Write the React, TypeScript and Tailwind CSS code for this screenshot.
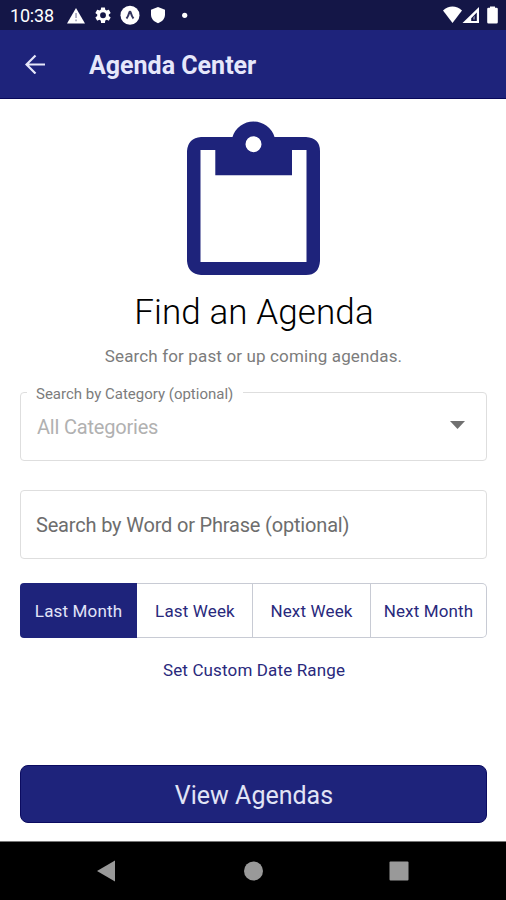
import React from "react";

function StatusBar() {
  return (
    <div className="flex h-[30px] shrink-0 items-center bg-[#141647] pl-[10px] pr-2 text-white">
      <span className="w-[45px] whitespace-nowrap pt-px text-[18px] leading-[30px] tracking-[-0.2px]">10:38</span>
      <svg className="ml-[11px]" width="134" height="30" viewBox="66 0 134 30" fill="#fff">
        <path d="M76 8 85 23.500H67Z" />
        <path d="M75.300 13h1.500v5h-1.500zM75.300 19.500h1.500v1.700h-1.500z" fill="#9a9bb4" />
        <g transform="translate(93.300 5.500) scale(.81)">
          <path d="M19.140 12.940c.04-.3.060-.61.060-.94s-.02-.64-.07-.94l2.030-1.580c.18-.14.230-.41.120-.61l-1.920-3.320c-.12-.22-.37-.29-.59-.22l-2.390.96c-.5-.38-1.030-.7-1.620-.94l-.36-2.540c-.04-.24-.24-.41-.48-.41h-3.840c-.24 0-.43.170-.47.410l-.36 2.540c-.59.240-1.130.57-1.620.94l-2.390-.96c-.22-.08-.47 0-.59.220L2.740 8.870c-.12.210-.08.470.12.610l2.030 1.580c-.05.300-.09.630-.09.940s.02.640.07.940l-2.030 1.580c-.18.140-.23.410-.12.610l1.920 3.320c.12.220.37.290.59.220l2.390-.96c.5.380 1.030.7 1.620.94l.36 2.540c.05.240.24.410.48.410h3.840c.24 0 .44-.17.470-.41l.36-2.540c.59-.24 1.130-.56 1.620-.94l2.390.96c.22.080.47 0 .59-.22l1.920-3.320c.12-.22.070-.47-.12-.61zM12 15.600A3.600 3.600 0 1 1 12 8.400a3.600 3.600 0 0 1 0 7.200z" />
        </g>
        <circle cx="130" cy="15.300" r="9.500" />
        <path d="M126.500 18.500c1.400-1.600 2.200-3.800 2.800-6 .3-1 1.100-1 1.400 0 .6 2.200 1.400 4.400 2.800 6" fill="none" stroke="#34365f" strokeWidth="2" />
        <path d="m158 7 7 2.700v4.800c0 4.300-3 7.200-7 8.700-4-1.500-7-4.400-7-8.700V9.700Z" />
        <circle cx="184.700" cy="15.300" r="2.600" />
      </svg>
      <svg className="ml-auto" width="56" height="30" viewBox="442 0 56 30" fill="#fff">
        <path d="M443 10.500c5.500-5.300 13.500-5.300 19 0L452.500 23Z" />
        <path fillRule="evenodd" d="M479 7v16h-16.500ZM476.800 12.500l-5.600 5.700v2.900h5.600Z" />
        <path d="M474.800 15.800v3.800h-1.600v-2.200Z" fill="#85869f" />
        <path d="M490 6.500h5v1.300h1.500q1.300 0 1.300 1.300v13.100q0 1.300-1.300 1.300h-8q-1.300 0-1.300-1.300V9.100q0-1.300 1.300-1.300H490Z" />
      </svg>
    </div>
  );
}

function AppBar() {
  return (
    <header className="flex h-[69px] shrink-0 items-center border-b border-[#08085a] bg-[#1e237b] pl-[25px] text-[#e6e7fa]">
      <svg width="21" height="20" viewBox="0 0 21 20" fill="none" stroke="currentColor" strokeWidth="2.200">
        <path d="M20 10.500H2M10.500 1.500l-9 9 9 9" />
      </svg>
      <h1 className="ml-[43px] mt-[3px] text-[25px] leading-[30px] font-bold">Agenda Center</h1>
    </header>
  );
}

function Clipboard() {
  return (
    <svg className="mt-[21px] self-center" width="133" height="155" viewBox="187 120 133 155">
      <path
        fill="#1e237b"
        fillRule="evenodd"
        d="M201 137H232.500a22 22 0 0 1 42 0H306q14 1 14 14V261q-1 14-14 14H201q-13-1-14-14V151q1-13 14-14ZM200.500 150V262H306.500V150H292V175.300H215.300V150ZM253.500 136.200a8 8 0 1 0 0 16 8 8 0 1 0 0-16Z"
      />
    </svg>
  );
}

const ranges = [
  { label: "Last Month", style: "w-[117px] bg-[#1e237b] text-[#e1e3f8]" },
  { label: "Last Week", style: "w-[116px] border-y border-r border-[#c8cbd4] pl-px" },
  { label: "Next Week", style: "w-[118px] border-y border-r border-[#c8cbd4]" },
  { label: "Next Month", style: "w-[116px] rounded-r-[5px] border-y border-r border-[#c8cbd4]" },
];

function DateRanges() {
  return (
    <div className="mt-[24px] flex h-[55px] w-[467px] overflow-hidden rounded-[4px] text-[17px] tracking-[0.15px] text-[#29297c]">
      {ranges.map((r) => (
        <button key={r.label} className={`flex shrink-0 items-center justify-center whitespace-nowrap pt-[2px] ${r.style}`}>
          {r.label}
        </button>
      ))}
    </div>
  );
}

function NavBar() {
  return (
    <nav className="flex h-[59px] shrink-0 items-center border-t border-[#777] bg-black">
      <svg width="506" height="58" viewBox="0 842 506 58" fill="#999">
        <path d="M97 871 115 860.500V881.500Z" />
        <circle cx="253.500" cy="871" r="9.500" />
        <rect x="389.500" y="861.500" width="19" height="19" rx="1" />
      </svg>
    </nav>
  );
}

export default function App() {
  return (
    <div className="flex h-[900px] w-[506px] flex-col overflow-hidden bg-white font-[Roboto,sans-serif]">
      <StatusBar />
      <AppBar />
      <main className="flex flex-1 flex-col px-5">
        <Clipboard />
        <h2 className="mt-[17px] whitespace-nowrap pl-[2px] text-center text-[35px] leading-[42px] font-light tracking-[0.1px] text-black">Find an Agenda</h2>
        <p className="mt-[12px] whitespace-nowrap pl-px text-center text-[17px] leading-[20px] tracking-[0.14px] text-[#7c7c7c]">Search for past or up coming agendas.</p>
        <div className="relative mt-[26px] flex h-[69px] w-[467px] items-center justify-between rounded-[4px] border border-[#dedede] pl-4 pr-[21px]">
          <span className="absolute -top-[9px] left-[6px] bg-white pl-[9px] pr-[10px] text-[15px] leading-[20px] whitespace-nowrap text-[#7c7c7c]">
            Search by Category (optional)
          </span>
          <span className="text-[20px] leading-[24px] tracking-[-0.2px] text-[#b1b1b1]">All Categories</span>
          <svg className="-mt-[4px]" width="15" height="8" viewBox="0 0 15 8">
            <path d="M0 0H15L7.500 8Z" fill="#707070" />
          </svg>
        </div>
        <div className="mt-[29px] flex h-[69px] w-[467px] items-center rounded-[4px] border border-[#dedede] pl-[15px]">
          <span className="whitespace-nowrap pt-px text-[20px] leading-[24px] tracking-[-0.18px] text-[#6d6d6d]">Search by Word or Phrase (optional)</span>
        </div>
        <DateRanges />
        <a className="mt-[22px] whitespace-nowrap pl-[2px] text-center text-[17px] leading-[20px] tracking-[0.14px] text-[#29297c]">Set Custom Date Range</a>
        <button className="mt-auto mb-[18px] h-[58px] w-[467px] rounded-[8px] border border-[#0b0b60] bg-[#1e237b] pl-px pt-[3px] text-[25px] leading-[30px] text-[#e1e4f6]">
          View Agendas
        </button>
      </main>
      <NavBar />
    </div>
  );
}
